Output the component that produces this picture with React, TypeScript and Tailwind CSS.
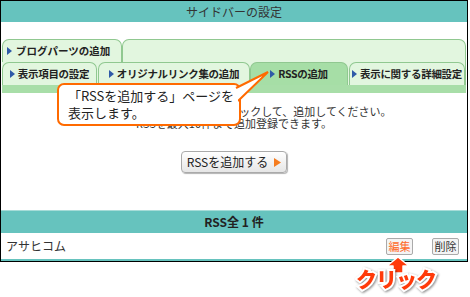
import React from "react";

const F = { fontFamily: '"Noto Sans CJK JP", "Noto Sans", sans-serif' };

function Tri({ c = "#2f5aa8" }: { c?: string }) {
  return (
    <svg width="5" height="8" viewBox="0 0 5 8" className="shrink-0">
      <polygon points="0,0 5,4 0,8" fill={c} />
    </svg>
  );
}

function Tab({ label, w, active, gap }: { label: string; w: string; active?: boolean; gap?: boolean }) {
  return (
    <div
      className={`${w} h-full flex items-center justify-center gap-[3px] rounded-t-[7px] border border-b-0 border-[#90c890] ${
        active ? "bg-[#a6dea6]" : "bg-[#e2f6df]"
      } ${gap ? "ml-[1px]" : ""}`}
    >
      <Tri />
      <span className="text-[10.5px] font-bold text-[#222] leading-none whitespace-nowrap tracking-[-0.3px]">{label}</span>
    </div>
  );
}

export default function App() {
  return (
    <div className="relative w-[470px] h-[297px] bg-white overflow-hidden" style={F}>
      <div className="w-[468px] h-[262px] border border-black flex flex-col">
        <div className="h-[21px] bg-[#66c3be] flex items-center justify-center text-[12px] text-[#333]">
          サイドバーの設定
        </div>
        <div className="h-[17px]" />
        <div className="px-[1px] flex flex-col">
          <div className="h-[23px] flex">
            <div className="w-[120px] h-full flex items-center gap-[4px] pl-[4px] rounded-t-[7px] border border-b-0 border-[#90c890] bg-[#e2f6df]">
              <Tri />
              <span className="text-[10.5px] font-bold text-[#222] leading-none whitespace-nowrap">ブログパーツの追加</span>
            </div>
            <div className="flex-1 h-full rounded-t-[7px] border border-b-0 border-[#90c890] bg-[#e2f6df]" />
          </div>
          <div className="h-[23px] flex bg-[#e2f6df] border-r border-[#90c890]">
            <Tab label="表示項目の設定" w="w-[95px]" />
            <Tab label="オリジナルリンク集の追加" w="w-[152px]" gap />
            <Tab label="RSSの追加" w="w-[98px]" active />
            <Tab label="表示に関する詳細設定" w="flex-1" gap />
          </div>
          <div className="h-[8px] bg-[#a8dea8]" />
        </div>
        <div className="flex flex-col items-center pt-[12px] text-[11px] leading-[12px] text-[#333]">
          <div className="whitespace-nowrap">「RSSを追加する」ボタンをクリックして、追加してください。</div>
          <div className="whitespace-nowrap">RSSを最大10件まで追加登録できます。</div>
          <div className="mt-[22px] w-[106px] h-[22px] rounded-[4px] border border-[#aaa] bg-gradient-to-b from-white to-[#e6e6e6] shadow-[1px_1px_1px_rgba(0,0,0,0.3)] flex items-center justify-center gap-[6px] text-[12px] text-[#222]">
            <span>RSSを追加する</span>
            <svg width="7" height="9" viewBox="0 0 7 9">
              <polygon points="0,0 7,4.5 0,9" fill="#f57c1f" />
            </svg>
          </div>
        </div>
        <div className="flex-1" />
        <div className="h-[23px] border-t border-[#a6dcd8] bg-[#66c3be] flex items-center justify-center text-[12px] font-semibold text-[#222]">
          RSS全 1 件
        </div>
        <div className="h-[26px] flex items-center pl-[5px] pr-[8px] text-[12px] text-[#333]">
          <span>アサヒコム</span>
          <div className="flex-1" />
          <div className="w-[27px] h-[17px] rounded-[2px] border border-[#aaa] bg-[#f4f4f4] flex items-center justify-center text-[11px] text-[#ff6a2a]">
            編集
          </div>
          <div className="w-[27px] h-[17px] ml-[19px] rounded-[2px] border border-[#aaa] bg-[#f4f4f4] flex items-center justify-center text-[11px] text-[#333]">
            削除
          </div>
        </div>
        <div className="h-[2px] bg-[#66c3be]" />
      </div>

      {/* callout */}
      <div className="absolute left-[57px] top-[83px] w-[184px] h-[43px] rounded-[7px] border-2 border-[#ff6a00] bg-white pl-[9px] pt-[2px] text-[13px] leading-[17px] text-[#222]">
        <div>「RSSを追加する」ページを</div>
        <div>表示します。</div>
      </div>
      <svg className="absolute left-0 top-0 pointer-events-none" width="470" height="297">
        <path d="M236 88 L268 72 L238 101" fill="white" stroke="#ff6a00" strokeWidth="2" strokeLinejoin="miter" />
        <polygon points="234,89 236,88 238,101 234,101" fill="white" />
      </svg>

      {/* click arrow + label */}
      <svg className="absolute left-[385px] top-[256px]" width="26" height="18" viewBox="0 0 26 18">
        <path d="M13 1 L24 10 L18 10 L18 17 L8 17 L8 10 L2 10 Z" fill="#ff3a0a" stroke="white" strokeWidth="1.5" strokeLinejoin="round" />
      </svg>
      <div
        className="absolute left-[356px] top-[268px] text-[21px] font-black text-[#ff3a0a] leading-none tracking-[-1px] [-webkit-text-stroke:4px_white] [paint-order:stroke_fill] drop-shadow-[1px_1px_1px_rgba(0,0,0,0.45)]"
      >
        クリック
      </div>
    </div>
  );
}
